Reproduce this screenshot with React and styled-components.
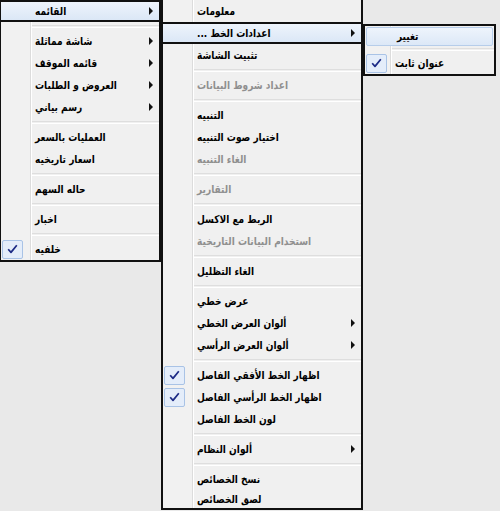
import styled, { createGlobalStyle, css } from "styled-components";

const GlobalStyle = createGlobalStyle`
  html, body {
    margin: 0;
    padding: 0;
    background: #e9e9e9;
  }
  body {
    font-family: "DejaVu Sans", sans-serif;
  }
`;

const Screen = styled.div`
  width: 500px;
  height: 511px;
  overflow: hidden;
  display: flex;
  align-items: flex-start;
  background: #e9e9e9;
`;

const Panel = styled.div`
  box-sizing: border-box;
  width: ${(p) => p.$width}px;
  margin-top: ${(p) => p.$top || 0}px;
  border: 2px solid #111;
  border-top-width: ${(p) => (p.$closedTop ? 2 : 0)}px;
  border-left-width: ${(p) => p.$left || 2}px;
  display: flex;
  flex-direction: column;
  background: linear-gradient(
    to right,
    #f1f1f1 0 ${(p) => p.$gutter}px,
    #dcdcdc ${(p) => p.$gutter}px ${(p) => p.$gutter + 1}px,
    #ffffff ${(p) => p.$gutter + 1}px ${(p) => p.$gutter + 2}px,
    #f0f0f0 ${(p) => p.$gutter + 2}px
  );
`;

const Row = styled.div`
  box-sizing: border-box;
  height: ${(p) => p.$h || 22}px;
  display: flex;
  align-items: center;
  ${(p) =>
    p.$active === "hard" &&
    css`
      border: 2px solid #111;
      margin: 0 -2px;
      padding-left: 2px;
      background: linear-gradient(#eef4fc, #dbe7f6);
    `}
  ${(p) =>
    p.$active === "soft" &&
    css`
      margin: 1px 1px 0;
      border: 1px solid #b6cdea;
      border-radius: 2px;
      background: linear-gradient(#eef4fc, #dce8f7);
    `}
`;

const Gutter = styled.div`
  width: ${(p) => p.$w}px;
  flex: none;
  display: flex;
  align-items: center;
  padding-left: 1px;
  box-sizing: border-box;
`;

const CheckBox = styled.div`
  width: 21px;
  height: 19px;
  box-sizing: border-box;
  border: 1px solid #a9c3e6;
  border-radius: 2px;
  background: #e4edfa;
  display: flex;
  align-items: center;
  justify-content: center;
`;

/* DejaVu's Arabic runs wider than the Tahoma in the shot, so squeeze it */
const Label = styled.span`
  display: inline-block;
  margin-left: 5px;
  font-size: 11px;
  font-weight: bold;
  white-space: nowrap;
  transform: scaleX(0.82);
  transform-origin: left center;
  color: ${(p) => (p.$disabled ? "#8f8f8f" : "#000")};
`;

const Arrow = styled.span`
  margin-left: auto;
  margin-right: 6px;
  flex: none;
  width: 0;
  height: 0;
  border-left: 4px solid #111;
  border-top: 4px solid transparent;
  border-bottom: 4px solid transparent;
`;

const Separator = styled.div`
  height: ${(p) => p.$h || 8}px;
  display: flex;
  align-items: center;
  padding-left: ${(p) => p.$indent}px;
  &::after {
    content: "";
    flex: 1;
    height: 1px;
    border-top: 1px solid #dedede;
    border-bottom: 1px solid #ffffff;
  }
`;

const Check = () => (
  <svg width="11" height="10" viewBox="0 0 11 10">
    <path
      d="M1.2 5.2 L4 8.4 L9.8 1.2"
      fill="none"
      stroke="#1d2b86"
      strokeWidth="1.7"
      strokeLinejoin="round"
    />
  </svg>
);

function Menu({ items, width, gutter, top, left, closedTop, rowH, sepH }) {
  return (
    <Panel
      $width={width}
      $gutter={gutter}
      $top={top}
      $left={left}
      $closedTop={closedTop}
    >
      {items.map((it, i) =>
        it === "-" ? (
          <Separator key={i} $indent={gutter + 2} $h={sepH} />
        ) : (
          <Row key={i} $active={it.active} $h={it.h || rowH}>
            <Gutter $w={it.active === "hard" ? gutter - 2 : gutter}>
              {it.check && (
                <CheckBox>
                  <Check />
                </CheckBox>
              )}
            </Gutter>
            <Label dir="rtl" $disabled={it.disabled}>
              {it.label}
            </Label>
            {it.arrow && <Arrow />}
          </Row>
        )
      )}
    </Panel>
  );
}

const mainMenu = [
  { label: "القائمه", arrow: true, active: "hard" },
  "-",
  { label: "شاشة مماثلة", arrow: true },
  { label: "قائمه الموقف", arrow: true },
  { label: "العروض و الطلبات", arrow: true },
  { label: "رسم بياني", arrow: true },
  "-",
  { label: "العمليات بالسعر" },
  { label: "اسعار تاريخيه" },
  "-",
  { label: "حاله السهم" },
  "-",
  { label: "اخبار" },
  "-",
  { label: "خلفيه", check: true },
];

const listMenu = [
  { label: "معلومات" },
  { label: "اعدادات الخط ...", arrow: true, active: "hard" },
  { label: "تثبيت الشاشة" },
  "-",
  { label: "اعداد شروط البيانات", disabled: true },
  "-",
  { label: "التنبيه" },
  { label: "اختيار صوت التنبيه" },
  { label: "الغاء التنبيه", disabled: true },
  "-",
  { label: "التقارير", disabled: true },
  "-",
  { label: "الربط مع الاكسل" },
  { label: "استخدام البيانات التاريخية", disabled: true },
  "-",
  { label: "الغاء التظليل" },
  "-",
  { label: "عرض خطي" },
  { label: "ألوان العرض الخطي", arrow: true },
  { label: "ألوان العرض الرأسي", arrow: true },
  "-",
  { label: "اظهار الخط الأفقي الفاصل", check: true },
  { label: "اظهار الخط الرأسي الفاصل", check: true },
  { label: "لون الخط الفاصل" },
  "-",
  { label: "ألوان النظام", arrow: true },
  "-",
  { label: "نسخ الخصائص" },
  { label: "لصق الخصائص", h: 18 },
];

const fontMenu = [
  { label: "تغيير", active: "soft", h: 19 },
  "-",
  { label: "عنوان ثابت", check: true },
];

export default function App() {
  return (
    <>
      <GlobalStyle />
      <Screen>
        <Menu items={mainMenu} width={161} gutter={29} left={1} />
        <Menu items={listMenu} width={202} gutter={29} />
        <Menu
          items={fontMenu}
          width={133}
          gutter={25}
          top={24}
          closedTop
          sepH={6}
        />
      </Screen>
    </>
  );
}
